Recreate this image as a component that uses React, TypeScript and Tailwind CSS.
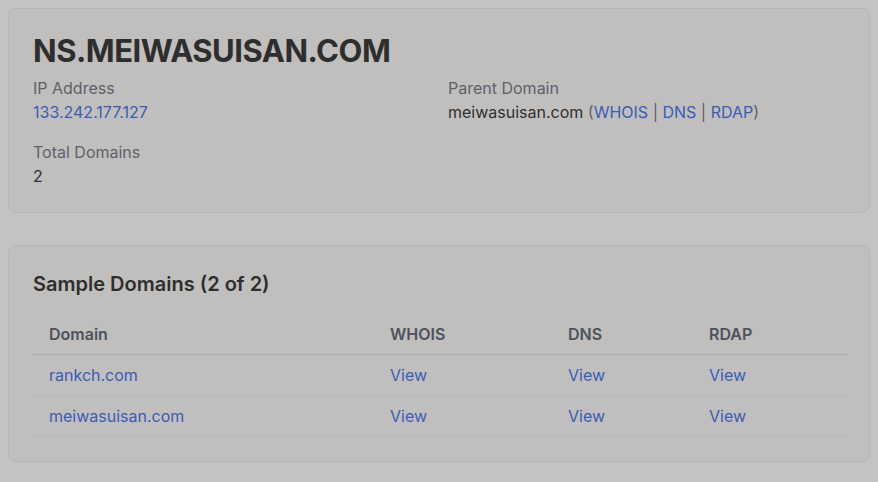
import React from "react";

const rows = [
  { domain: "rankch.com" },
  { domain: "meiwasuisan.com" },
];

const App: React.FC = () => {
  return (
    <div
      className="min-h-screen bg-[#c4c3c1] p-2 text-[#2f2f2f]"
      style={{ fontFamily: "Inter, 'Liberation Sans', sans-serif" }}
    >
      {/* Nameserver summary */}
      <div className="mb-8 rounded-lg border border-[#b6b5b3] bg-[#c0bfbd] p-6">
        <h1 className="mb-2 text-[31px] font-bold leading-[35px] tracking-[-0.5px] text-[#2e2e2e]">
          NS.MEIWASUISAN.COM
        </h1>
        <div className="grid grid-cols-2 gap-x-4 gap-y-4 text-base leading-6">
          <div>
            <div className="text-[#5c616b]">IP Address</div>
            <a className="text-[#3a5cb6]">133.242.177.127</a>
          </div>
          <div className="pl-px">
            <div className="text-[#5c616b]">Parent Domain</div>
            <div>
              meiwasuisan.com <span className="text-[#5c616b]">(</span>
              <a className="text-[#3a5cb6]">WHOIS</a>
              <span className="text-[#5c616b]"> | </span>
              <a className="text-[#3a5cb6]">DNS</a>
              <span className="text-[#5c616b]"> | </span>
              <a className="text-[#3a5cb6]">RDAP</a>
              <span className="text-[#5c616b]">)</span>
            </div>
          </div>
          <div>
            <div className="text-[#5c616b]">Total Domains</div>
            <div>2</div>
          </div>
        </div>
      </div>

      {/* Sample domains */}
      <div className="rounded-lg border border-[#b6b5b3] bg-[#c0bfbd] p-6">
        <h2 className="mb-4 text-xl font-semibold leading-7 text-[#2e2e2e]">
          Sample Domains (2 of 2)
        </h2>
        <table className="w-[814px] border-collapse text-left text-base leading-6">
          <thead>
            <tr className="border-b border-[#adacaa]">
              <th className="w-[341px] px-4 py-2 font-semibold text-[#4d525c]">Domain</th>
              <th className="w-[178px] px-4 py-2 font-semibold text-[#4d525c]">WHOIS</th>
              <th className="w-[141px] px-4 py-2 font-semibold text-[#4d525c]">DNS</th>
              <th className="px-4 py-2 font-semibold text-[#4d525c]">RDAP</th>
            </tr>
          </thead>
          <tbody>
            {rows.map((r) => (
              <tr key={r.domain} className="border-b border-[#b8b7b5]">
                <td className="px-4 py-2">
                  <a className="text-[#3a5cb6]">{r.domain}</a>
                </td>
                <td className="px-4 py-2">
                  <a className="text-[#3a5cb6]">View</a>
                </td>
                <td className="px-4 py-2">
                  <a className="text-[#3a5cb6]">View</a>
                </td>
                <td className="px-4 py-2">
                  <a className="text-[#3a5cb6]">View</a>
                </td>
              </tr>
            ))}
          </tbody>
        </table>
      </div>
    </div>
  );
};

export default App;
